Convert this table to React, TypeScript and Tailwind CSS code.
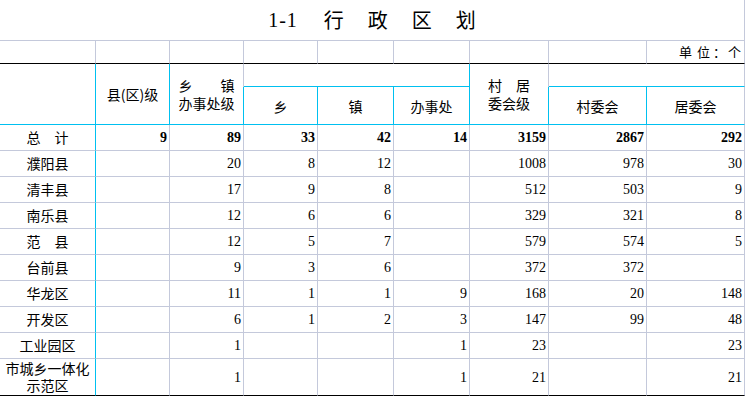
import React from 'react';

// grid line colours of the sheet
const GRAY_R = 'border-r border-r-[#c4c9db]';
const CYAN_R = 'border-r border-r-[#00c0f0]';
const GRAY_B = 'border-b border-b-[#c4c9db]';
const CYAN_B = 'border-b border-b-[#00c0f0]';
const BLACK_B = 'border-b border-b-black';
const CYAN_L = 'shadow-[-1px_0_0_#00c0f0]';

const CJK = "font-['Noto_Sans_CJK_SC',sans-serif]";
const NUM = "font-['Liberation_Serif','Times_New_Roman',serif]";

type Val = number | '';

const rows: { name: string[]; vals: Val[]; bold?: boolean }[] = [
  { name: ['总　计'], vals: [9, 89, 33, 42, 14, 3159, 2867, 292], bold: true },
  { name: ['濮阳县'], vals: ['', 20, 8, 12, '', 1008, 978, 30] },
  { name: ['清丰县'], vals: ['', 17, 9, 8, '', 512, 503, 9] },
  { name: ['南乐县'], vals: ['', 12, 6, 6, '', 329, 321, 8] },
  { name: ['范　县'], vals: ['', 12, 5, 7, '', 579, 574, 5] },
  { name: ['台前县'], vals: ['', 9, 3, 6, '', 372, 372, ''] },
  { name: ['华龙区'], vals: ['', 11, 1, 1, 9, 168, 20, 148] },
  { name: ['开发区'], vals: ['', 6, 1, 2, 3, 147, 99, 48] },
  { name: ['工业园区'], vals: ['', 1, '', '', 1, 23, '', 23] },
  { name: ['市城乡一体化', '示范区'], vals: ['', 1, '', '', 1, 21, '', 21] },
];

function HeadCell({ className, lines = [] }: { className: string; lines?: string[] }) {
  return (
    <div className={`flex flex-col items-center justify-center text-center text-[14px] text-black ${CJK} ${className}`}>
      {lines.map((l) => (
        <span key={l} className="block h-[18px] leading-[18px]">
          {l}
        </span>
      ))}
    </div>
  );
}

export default function App() {
  return (
    <div className="w-[748px] h-[398px] bg-white overflow-hidden">
      <div className="grid w-[745px] grid-cols-[96px_74px_74px_74px_76px_76px_79px_98px_98px] grid-rows-[41px_23px_23px_38px_repeat(9,26px)_37px]">
        {/* title */}
        <div className={`col-span-9 flex items-center justify-center gap-[24px] text-[20px] text-black ${GRAY_R} ${GRAY_B}`}>
          <span className={`${NUM} tracking-[1px] mr-[2px]`}>1-1</span>
          <span className={CJK}>行</span>
          <span className={CJK}>政</span>
          <span className={CJK}>区</span>
          <span className={CJK}>划</span>
        </div>

        {/* unit row */}
        {Array.from({ length: 8 }).map((_, i) => (
          <div key={i} className={`${GRAY_R} ${BLACK_B}`} />
        ))}
        <div className={`flex items-center justify-end pr-[3px] text-[13px] text-black ${CJK} ${GRAY_R} ${BLACK_B}`}>
          <span className="mr-[5px]">单</span>
          <span className="mr-[3px]">位</span>
          <span className="mr-[2px]">：</span>
          <span>个</span>
        </div>

        {/* header */}
        <HeadCell className={`row-span-2 ${CYAN_R} ${CYAN_B}`} />
        <HeadCell className={`row-span-2 ${CYAN_R} ${CYAN_B}`} lines={['县(区)级']} />
        <HeadCell className={`row-span-2 ${GRAY_R} ${CYAN_B}`} lines={['乡　　镇', '办事处级']} />
        <HeadCell className={`col-span-3 ${CYAN_R} ${CYAN_B}`} />
        <HeadCell className={`row-span-2 ${GRAY_R} ${CYAN_B}`} lines={['村　居', '委会级']} />
        <HeadCell className={`col-span-2 ${GRAY_R} ${CYAN_B}`} />
        <HeadCell className={`${CYAN_R} ${CYAN_B} ${CYAN_L}`} lines={['乡']} />
        <HeadCell className={`${CYAN_R} ${CYAN_B}`} lines={['镇']} />
        <HeadCell className={`${CYAN_R} ${CYAN_B}`} lines={['办事处']} />
        <HeadCell className={`${CYAN_R} ${CYAN_B} ${CYAN_L}`} lines={['村委会']} />
        <HeadCell className={`${GRAY_R} ${CYAN_B}`} lines={['居委会']} />

        {/* body */}
        {rows.map((row, r) => {
          const bottom = r === rows.length - 1 ? BLACK_B : GRAY_B;
          return (
            <React.Fragment key={r}>
              <div
                className={`flex flex-col items-center justify-center text-center text-[14px] text-black ${CJK} ${CYAN_R} ${bottom}`}
              >
                {row.name.map((n) => (
                  <span key={n} className="block h-[17px] leading-[17px]">
                    {n}
                  </span>
                ))}
              </div>
              {row.vals.map((v, c) => (
                <div
                  key={c}
                  className={`flex items-center justify-end pr-[2px] text-[14px] text-black ${NUM} ${row.bold ? 'font-bold' : ''} ${GRAY_R} ${bottom}`}
                >
                  {v}
                </div>
              ))}
            </React.Fragment>
          );
        })}
      </div>
    </div>
  );
}
